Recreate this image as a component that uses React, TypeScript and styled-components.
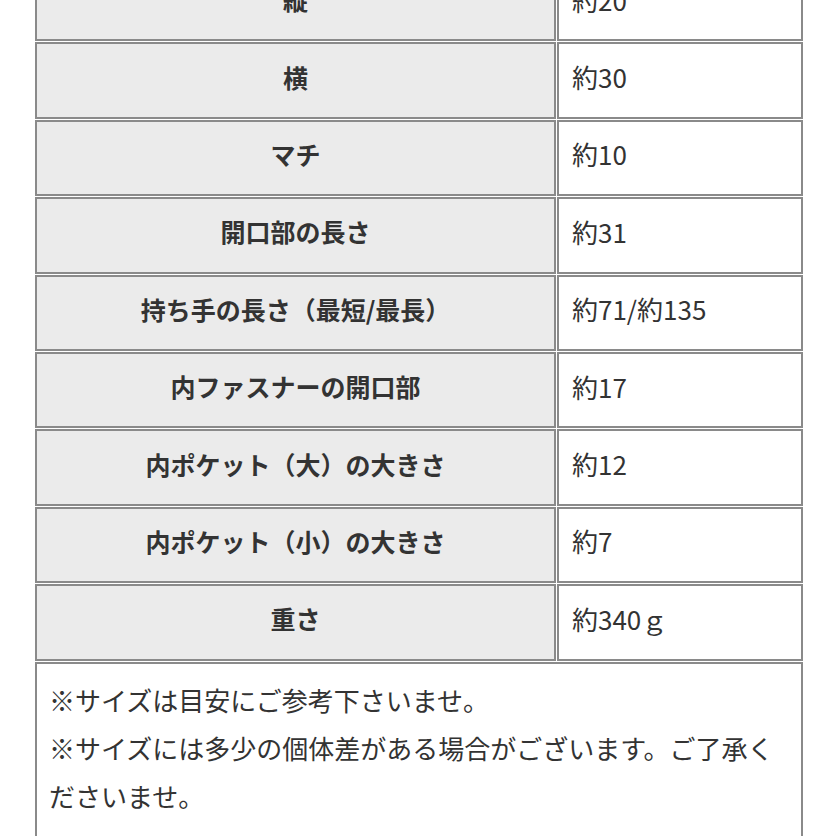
import styled, { createGlobalStyle } from "styled-components";

const GlobalStyle = createGlobalStyle`
  html, body {
    margin: 0;
    padding: 0;
    background: #ffffff;
    overflow: hidden;
  }
  body {
    font-family: "Noto Sans CJK JP", "Noto Sans", sans-serif;
    color: #333333;
  }
`;

const Page = styled.div`
  width: 836px;
  height: 836px;
  overflow: hidden;
`;

const Content = styled.div`
  margin-top: -36px;
  margin-left: 34px;
  width: 770px;
`;

const SizeTable = styled.table`
  width: 770px;
  border-collapse: separate;
  border-spacing: 1px;
  table-layout: fixed;
`;

const HeadCell = styled.th`
  width: 521px;
  height: 76.4px;
  box-sizing: border-box;
  border: 2px solid #8a8a8a;
  background: #ebebeb;
  font-size: 25px;
  font-weight: 700;
  text-align: center;
  color: #333333;
  padding: 0 10px 8px;
`;

const ValueCell = styled.td`
  height: 76.4px;
  box-sizing: border-box;
  border: 2px solid #8a8a8a;
  background: #ffffff;
  font-size: 26px;
  font-weight: 400;
  text-align: left;
  color: #333333;
  padding: 0 10px 8px 13px;
`;

const NoteBox = styled.div`
  margin-left: 1px;
  width: 768px;
  box-sizing: border-box;
  border: 2px solid #8a8a8a;
  padding: 12px 12px 20px 12px;
  font-size: 26px;
  line-height: 48px;
  color: #333333;
`;

const NoteLine = styled.p`
  margin: 0;
`;

const rows: [string, string][] = [
  ["縦", "約20"],
  ["横", "約30"],
  ["マチ", "約10"],
  ["開口部の長さ", "約31"],
  ["持ち手の長さ（最短/最長）", "約71/約135"],
  ["内ファスナーの開口部", "約17"],
  ["内ポケット（大）の大きさ", "約12"],
  ["内ポケット（小）の大きさ", "約7"],
  ["重さ", "約340ｇ"],
];

const App = () => {
  return (
    <>
      <GlobalStyle />
      <Page>
        <Content>
          <SizeTable>
            <tbody>
              {rows.map(([label, value]) => (
                <tr key={label}>
                  <HeadCell>{label}</HeadCell>
                  <ValueCell>{value}</ValueCell>
                </tr>
              ))}
            </tbody>
          </SizeTable>
          <NoteBox>
            <NoteLine>※サイズは目安にご参考下さいませ。</NoteLine>
            <NoteLine>
              ※サイズには多少の個体差がある場合がございます。ご了承くださいませ。
            </NoteLine>
          </NoteBox>
        </Content>
      </Page>
    </>
  );
};

export default App;
